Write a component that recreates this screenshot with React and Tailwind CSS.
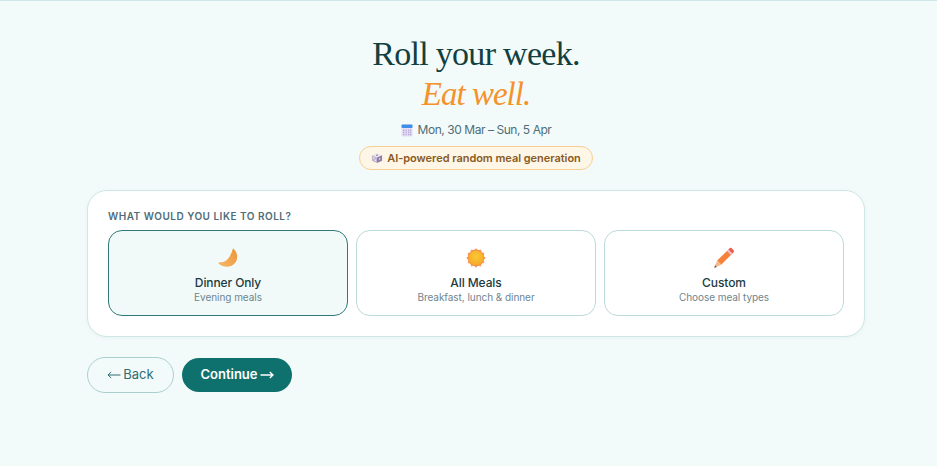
import React from "react";

const sans = "font-['Inter','Noto_Sans',sans-serif]";

const CalendarIcon = () => (
  <svg width="12" height="13" viewBox="0 0 12 13">
    <rect x="0.5" y="0.5" width="11" height="12" rx="1" fill="#e6dff5" />
    <rect x="0.5" y="0.5" width="11" height="3.5" rx="1" fill="#3f8ee8" />
    {[2, 4.5, 7, 9].map((x) =>
      [5.5, 7.7, 9.9].map((y) => <rect key={`${x}-${y}`} x={x} y={y} width="1.3" height="1.4" fill="#b3a5d8" />)
    )}
  </svg>
);

const DiceIcon = () => (
  <svg width="12" height="12" viewBox="0 0 13 13">
    <path d="M6.5 1 L12 3.5 L6.5 6 L1 3.5 Z" fill="#ece7f0" />
    <path d="M1 3.5 L6.5 6 L6.5 12 L1 9.5 Z" fill="#c0b4ce" />
    <path d="M12 3.5 L6.5 6 L6.5 12 L12 9.5 Z" fill="#8f7fa6" />
    <circle cx="6.5" cy="3.4" r="0.8" fill="#6d5a88" />
    <circle cx="3" cy="6.5" r="0.8" fill="#f4f0f8" />
    <circle cx="4.8" cy="9" r="0.8" fill="#f4f0f8" />
    <circle cx="9.3" cy="7.7" r="0.8" fill="#f4f0f8" />
  </svg>
);

const MoonIcon = () => (
  <svg width="20" height="20" viewBox="0 0 20 20">
    <defs>
      <linearGradient id="moon" x1="0" y1="1" x2="1" y2="0">
        <stop offset="0" stopColor="#f7b76c" />
        <stop offset="1" stopColor="#ec9334" />
      </linearGradient>
    </defs>
    <path d="M15 0.2 C19.8 4 20.4 10.6 17.2 14.8 C13.6 19.6 6 20.4 0.6 15.6 C0.4 14.8 0.9 14.2 1.6 14.2 C5.8 14.4 9.2 12.6 11.4 9 C13 6.4 14.2 3.4 15 0.2 Z" fill="url(#moon)" />
  </svg>
);

const SunIcon = () => (
  <svg width="20" height="20" viewBox="0 0 20 20">
    <defs>
      <radialGradient id="sun" cx="0.5" cy="0.4" r="0.6">
        <stop offset="0" stopColor="#fbc934" />
        <stop offset="1" stopColor="#f4a928" />
      </radialGradient>
    </defs>
    {[0, 30, 60, 90, 120, 150, 180, 210, 240, 270, 300, 330].map((a) => (
      <circle key={a} cx="10" cy="1.5" r="1" fill="#f99a5c" transform={`rotate(${a} 10 10)`} />
    ))}
    <circle cx="10" cy="10" r="8.4" fill="#f78a4a" />
    <circle cx="10" cy="10" r="7.6" fill="url(#sun)" />
  </svg>
);

const PencilIcon = () => (
  <svg width="22" height="22" viewBox="0 0 22 22">
    <path d="M4.2 13.6 L15 2.9 L19 6.9 L8.2 17.7 Z" fill="#f5813a" />
    <path d="M15 2.9 L16.8 1.1 Q17.6 0.4 18.5 1.1 L20.8 3.4 Q21.4 4.2 20.7 5.1 L19 6.9 Z" fill="#f4594a" />
    <path d="M14 3.9 L15.4 2.5 L19.4 6.5 L18 7.9 Z" fill="#ecc4cf" />
    <path d="M4.2 13.6 L8.2 17.7 L1.2 20.8 Z" fill="#f3b98d" />
    <path d="M2.2 18.2 L3.8 19.9 L1.2 20.8 Z" fill="#6b4a55" />
  </svg>
);

const Arrow = ({ left, width }) => (
  <svg width="14" height="10" viewBox="0 0 14 10" fill="none" stroke="currentColor" strokeWidth={width} className={left ? "rotate-180" : ""}>
    <path d="M0.5 5 H13 M9.8 2 L13 5 L9.8 8" />
  </svg>
);

const options = [
  { icon: <MoonIcon />, title: "Dinner Only", sub: "Evening meals", selected: true },
  { icon: <SunIcon />, title: "All Meals", sub: "Breakfast, lunch & dinner" },
  { icon: <PencilIcon />, title: "Custom", sub: "Choose meal types" },
];

const App = () => {
  return (
    <div className={`min-h-[466px] bg-[#f3fbfa] border-t border-[#cfe6ea] ${sans}`}>
      <div className="w-[778px] ml-[87px] pt-[33px]">
        <div className="flex flex-col items-center">
          <h1 className="font-['Liberation_Serif',serif] text-[34px] leading-[40px] tracking-[-0.7px] text-[#12403f] font-normal">Roll your week.</h1>
          <div className="font-['Liberation_Serif',serif] italic text-[33px] leading-[40px] tracking-[-1px] text-[#f4922b]">Eat well.</div>
          <div className="flex items-center gap-[5px] mt-[7px] text-[12px] leading-[18px] tracking-[-0.45px] text-[#4f6d78]">
            <CalendarIcon />
            <span>Mon, 30 Mar – Sun, 5 Apr</span>
          </div>
          <div className="flex items-center gap-[4px] mt-[7px] h-[24px] px-[11px] rounded-full border border-[#f6cf94] bg-[#fef6e7] text-[11px] font-semibold tracking-[-0.04px] text-[#8a5a22]">
            <DiceIcon />
            <span>AI-powered random meal generation</span>
          </div>
        </div>

        <div className="mt-[20px] h-[147px] bg-white rounded-[20px] border border-[#cfe6e6] shadow-[0_1px_4px_rgba(20,90,90,0.06)] px-[20px] pt-[18px]">
          <div className="text-[10px] leading-[14px] font-semibold tracking-[0.05em] text-[#4f6d78]">WHAT WOULD YOU LIKE TO ROLL?</div>
          <div className="grid grid-cols-3 gap-[8px] mt-[7px]">
            {options.map((o) => (
              <div
                key={o.title}
                className={`h-[86px] rounded-[14px] border flex flex-col items-center pt-[16px] ${o.selected ? "border-[#2f7a78] bg-[#f1faf9]" : "border-[#bcd9da] bg-white"}`}
              >
                <div className="h-[22px] flex items-center justify-center">{o.icon}</div>
                <div className="mt-[6px] text-[12px] leading-[16px] font-medium tracking-[-0.1px] text-[#1c3b3f]">{o.title}</div>
                <div className="text-[10px] leading-[12px] tracking-[-0.05px] text-[#6f858e]">{o.sub}</div>
              </div>
            ))}
          </div>
        </div>

        <div className="flex items-center gap-[8px] mt-[20px]">
          <button className="flex items-center justify-center gap-[2px] w-[87px] h-[36px] rounded-full border border-[#a9d0cf] text-[13px] text-[#2f6b72]">
            <Arrow left width={1} />
            <span>Back</span>
          </button>
          <button className="flex items-center justify-center gap-[2px] w-[110px] h-[34px] rounded-full bg-[#0f716e] text-[13px] font-semibold text-white">
            <span>Continue</span>
            <Arrow width={1.3} />
          </button>
        </div>
      </div>
    </div>
  );
};

export default App;
